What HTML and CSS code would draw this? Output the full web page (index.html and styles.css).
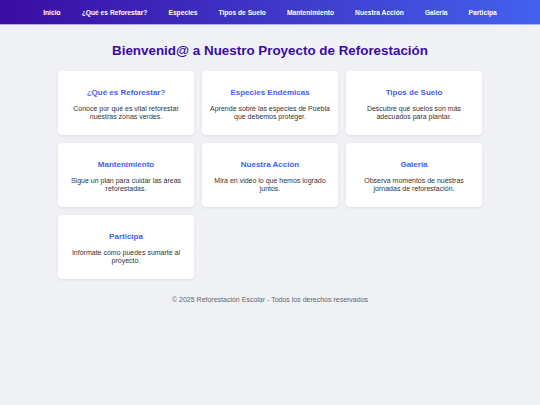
FILE: index.html
```html
<!DOCTYPE html>
<html lang="es">
    <head>
        <meta charset="utf-8">
        <meta name="viewport" content="width=device-width, initial-scale=1.0">
        <title>Reforestación Escolar</title>
        <link rel="stylesheet" href="styles.css">
    </head>
    <body>
        <nav class="topnav">
            <a href="#">Inicio</a>
            <a href="#">¿Qué es Reforestar?</a>
            <a href="#">Especies</a>
            <a href="#">Tipos de Suelo</a>
            <a href="#">Mantenimiento</a>
            <a href="#">Nuestra Acción</a>
            <a href="#">Galeria</a>
            <a href="#">Participa</a>
        </nav>
        <main class="main">
            <h1>Bienvenid@ a Nuestro Proyecto de Reforestación</h1>
            <div class="cards">
                <div class="card">
                    <h3>¿Qué es Reforestar?</h3>
                    <p>Conoce por qué es vital reforestar nuestras zonas verdes.</p>
                </div>
                <div class="card">
                    <h3>Especies Endémicas</h3>
                    <p>Aprende sobre las especies de Puebla que debemos proteger.</p>
                </div>
                <div class="card">
                    <h3>Tipos de Suelo</h3>
                    <p>Descubre qué suelos son más adecuados para plantar.</p>
                </div>
                <div class="card">
                    <h3>Mantenimiento</h3>
                    <p>Sigue un plan para cuidar las áreas reforestadas.</p>
                </div>
                <div class="card">
                    <h3>Nuestra Acción</h3>
                    <p>Mira en video lo que hemos logrado juntos.</p>
                </div>
                <div class="card">
                    <h3>Galeria</h3>
                    <p>Observa momentos de nuestras jornadas de reforestación.</p>
                </div>
                <div class="card">
                    <h3>Participa</h3>
                    <p>Infórmate cómo puedes sumarte al proyecto.</p>
                </div>
            </div>
        </main>
        <footer class="footer">© 2025 Reforestación Escolar - Todos los derechos reservados</footer>
    </body>
</html>
```

FILE: styles.css
```css
body{
    margin: 0;
    font-family: "Liberation Sans", Arial, Helvetica, sans-serif;
    background-color: #f0f1f5;
    color: #333;
}

.topnav{
    display: flex;
    justify-content: center;
    align-items: center;
    gap: 21px;
    height: 24px;
    background: linear-gradient(to right, #3a0ca3, #4361ee);
    border-bottom: 1px solid;
    border-image: linear-gradient(to right, #b8a6e4, #a8b6f6) 1;
}
.topnav a{
    color: #fff;
    font-size: 6.7px;
    font-weight: bold;
    text-decoration: none;
}

.main{
    width: 424px;
    margin: 0 auto;
}
.main h1{
    margin: 18px 0 12px;
    font-size: 13.4px;
    line-height: 16px;
    text-align: center;
    color: #3a0ca3;
}

.cards{
    display: grid;
    grid-template-columns: repeat(3, 1fr);
    gap: 8.5px 8px;
}
.card{
    background: #fff;
    border-radius: 4px;
    box-shadow: 0 1px 3px rgba(0, 0, 0, 0.08);
    padding: 16.5px 5px 13px;
    text-align: center;
}
.card h3{
    margin: 0 0 7px;
    font-size: 8px;
    line-height: 10px;
    color: #4361ee;
}
.card p{
    margin: 0;
    font-size: 7px;
    line-height: 8.5px;
    color: #333;
}

.footer{
    margin-top: 17px;
    text-align: center;
    font-size: 7px;
    color: #666;
}
```
